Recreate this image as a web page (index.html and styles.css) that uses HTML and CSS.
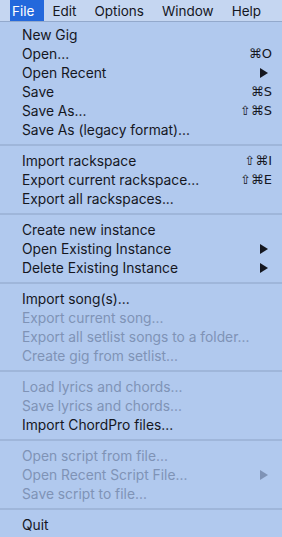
FILE: index.html
```html
<!DOCTYPE html>
<html lang="en">
<head>
    <meta charset="UTF-8">
    <meta name="viewport" content="width=device-width, initial-scale=1.0">
    <title>File Menu</title>
    <link rel="stylesheet" href="styles.css">
</head>
<body>
    <div class="menubar">
        <span class="menubar-item active">File</span>
        <span class="menubar-item">Edit</span>
        <span class="menubar-item">Options</span>
        <span class="menubar-item">Window</span>
        <span class="menubar-item">Help</span>
    </div>
    <div class="menu">
        <div class="item"><span>New Gig</span></div>
        <div class="item"><span>Open...</span><span class="key">⌘O</span></div>
        <div class="item"><span>Open Recent</span><svg class="arrow" width="8" height="10" viewBox="0 0 8 10"><polygon points="0,0 8,5 0,10"/></svg></div>
        <div class="item"><span>Save</span><span class="key">⌘S</span></div>
        <div class="item"><span>Save As...</span><span class="key">⇧⌘S</span></div>
        <div class="item"><span>Save As (legacy format)...</span></div>
        <div class="separator"></div>
        <div class="item"><span>Import rackspace</span><span class="key">⇧⌘I</span></div>
        <div class="item"><span>Export current rackspace...</span><span class="key">⇧⌘E</span></div>
        <div class="item"><span>Export all rackspaces...</span></div>
        <div class="separator"></div>
        <div class="item"><span>Create new instance</span></div>
        <div class="item"><span>Open Existing Instance</span><svg class="arrow" width="8" height="10" viewBox="0 0 8 10"><polygon points="0,0 8,5 0,10"/></svg></div>
        <div class="item"><span>Delete Existing Instance</span><svg class="arrow" width="8" height="10" viewBox="0 0 8 10"><polygon points="0,0 8,5 0,10"/></svg></div>
        <div class="separator"></div>
        <div class="item"><span>Import song(s)...</span></div>
        <div class="item disabled"><span>Export current song...</span></div>
        <div class="item disabled"><span>Export all setlist songs to a folder...</span></div>
        <div class="item disabled"><span>Create gig from setlist...</span></div>
        <div class="separator"></div>
        <div class="item disabled"><span>Load lyrics and chords...</span></div>
        <div class="item disabled"><span>Save lyrics and chords...</span></div>
        <div class="item"><span>Import ChordPro files...</span></div>
        <div class="separator"></div>
        <div class="item disabled"><span>Open script from file...</span></div>
        <div class="item disabled"><span>Open Recent Script File...</span><svg class="arrow" width="8" height="10" viewBox="0 0 8 10"><polygon points="0,0 8,5 0,10"/></svg></div>
        <div class="item disabled"><span>Save script to file...</span></div>
        <div class="separator"></div>
        <div class="item"><span>Quit</span></div>
    </div>
</body>
</html>
```

FILE: styles.css
```css
body {
    margin: 0;
    padding: 0;
    background: #b1c9ee;
    font-family: Inter, "Liberation Sans", sans-serif;
    font-size: 13.8px;
    color: #15171f;
}

.menubar {
    display: flex;
    height: 21px;
    padding-left: 10px;
    background: #c5d6f1;
    border-bottom: 1px solid #93a9cc;
}

.menubar-item {
    display: flex;
    align-items: center;
    padding: 0 10px 0 2px;
    margin-right: 6px;
    font-size: 13.5px;
}

.menubar-item.active {
    background: #2368dc;
    color: #fff;
}

.menu {
    padding-top: 3px;
    padding-bottom: 3px;
}

.item {
    display: flex;
    justify-content: space-between;
    align-items: center;
    height: 19px;
    padding: 0 10px 0 22px;
}

.item.disabled {
    color: #7f93b6;
}

.key {
    font-family: "DejaVu Sans", sans-serif;
    font-size: 13px;
}

.arrow {
    margin-right: 4px;
    fill: #15171f;
}

.item.disabled .arrow {
    fill: #7f93b6;
}

.separator {
    height: 2px;
    margin: 5px 0;
    background: #9fb6da;
}
```
